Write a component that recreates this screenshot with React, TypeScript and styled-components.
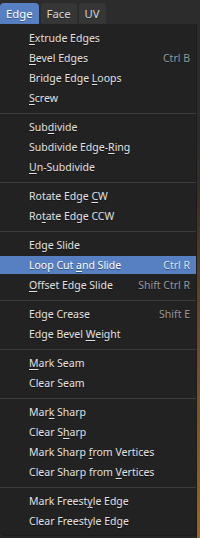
import React from "react";
import styled, { createGlobalStyle } from "styled-components";

const Global = createGlobalStyle`
  html, body { margin: 0; padding: 0; background: #2b2b2b; }
  body { font-family: "Noto Sans", "DejaVu Sans", sans-serif; }
`;

const Screen = styled.div`
  width: 200px;
  height: 538px;
  display: flex;
  flex-direction: column;
  background: #2b2b2b;
  overflow: hidden;
`;

const Header = styled.div`
  height: 24px;
  display: flex;
  align-items: flex-end;
  gap: 2px;
  background: #2c2c2c;
  flex-shrink: 0;
`;

const Tab = styled.div<{ $active?: boolean }>`
  height: 21px;
  padding: 0 6px;
  display: flex;
  align-items: center;
  border-radius: 4px 4px 0 0;
  background: ${(p) => (p.$active ? "#5680c2" : "#363636")};
  color: ${(p) => (p.$active ? "#ffffff" : "#d8d8d8")};
  font-size: 11.3px;
  line-height: 1;
  text-shadow: 0 1px 0 rgba(0, 0, 0, 0.35);
`;

const Body = styled.div`
  flex: 1;
  display: flex;
`;

const Menu = styled.div`
  width: 196px;
  padding: 4px 0;
  box-sizing: border-box;
  height: 511px;
  background: #222222;
  border-radius: 0 0 4px 4px;
  box-shadow: 1px 1px 2px rgba(0, 0, 0, 0.5);
  display: flex;
  flex-direction: column;
`;

const Strip = styled.div`
  flex: 1;
  background: linear-gradient(
    to bottom,
    #2c2c2c 0px,
    #2c2c2c 120px,
    #3a3026 180px,
    #6a4a22 300px,
    #a0651c 100%
  );
  border-left: 1px solid #1c1c1c;
`;

const Item = styled.div<{ $active?: boolean }>`
  height: 18px;
  margin: 1px 0;
  padding: 0 6px 0 29px;
  display: flex;
  align-items: center;
  justify-content: space-between;
  background: ${(p) => (p.$active ? "#5680c2" : "transparent")};
  color: ${(p) => (p.$active ? "#ffffff" : "#e2e2e2")};
  font-size: 10.5px;
  line-height: 1;
  white-space: nowrap;
  text-shadow: 0 1px 0 rgba(0, 0, 0, 0.45);
`;

const Shortcut = styled.span<{ $active?: boolean }>`
  color: ${(p) => (p.$active ? "#dde6f4" : "#9a9a9a")};
`;

const Separator = styled.div`
  height: 9px;
  padding-top: 5px;
  box-sizing: border-box;
  &::before {
    content: "";
    display: block;
    height: 1px;
    background: #3c3c3c;
  }
`;

const Mnemonic = styled.span`
  text-decoration: underline;
  text-underline-offset: 2px;
  text-decoration-thickness: 1px;
`;

type Entry = { label: string; shortcut?: string; active?: boolean } | "sep";

const entries: Entry[] = [
  { label: "&Extrude Edges" },
  { label: "&Bevel Edges", shortcut: "Ctrl B" },
  { label: "Bridge Edge &Loops" },
  { label: "&Screw" },
  "sep",
  { label: "Sub&divide" },
  { label: "Subdivide Edge-&Ring" },
  { label: "&Un-Subdivide" },
  "sep",
  { label: "Rotate Edge &CW" },
  { label: "Ro&tate Edge CCW" },
  "sep",
  { label: "Edge Slide" },
  { label: "Loop Cut &and Slide", shortcut: "Ctrl R", active: true },
  { label: "&Offset Edge Slide", shortcut: "Shift Ctrl R" },
  "sep",
  { label: "Edge Crease", shortcut: "Shift E" },
  { label: "Edge Bevel &Weight" },
  "sep",
  { label: "&Mark Seam" },
  { label: "Clear Seam" },
  "sep",
  { label: "Mar&k Sharp" },
  { label: "Clear S&harp" },
  { label: "Mark Sharp &from Vertices" },
  { label: "Clear Sharp from &Vertices" },
  "sep",
  { label: "Mark Freest&yle Edge" },
  { label: "Clear Freestyle Edge" },
];

function Label({ text }: { text: string }) {
  const i = text.indexOf("&");
  if (i < 0) return <span>{text}</span>;
  return (
    <span>
      {text.slice(0, i)}
      <Mnemonic>{text[i + 1]}</Mnemonic>
      {text.slice(i + 2)}
    </span>
  );
}

export default function App() {
  return (
    <>
      <Global />
      <Screen>
        <Header>
          <Tab $active>Edge</Tab>
          <Tab>Face</Tab>
          <Tab>UV</Tab>
        </Header>
        <Body>
          <Menu>
            {entries.map((e, idx) =>
              e === "sep" ? (
                <Separator key={idx} />
              ) : (
                <Item key={idx} $active={e.active}>
                  <Label text={e.label} />
                  {e.shortcut && <Shortcut $active={e.active}>{e.shortcut}</Shortcut>}
                </Item>
              )
            )}
          </Menu>
          <Strip />
        </Body>
      </Screen>
    </>
  );
}
